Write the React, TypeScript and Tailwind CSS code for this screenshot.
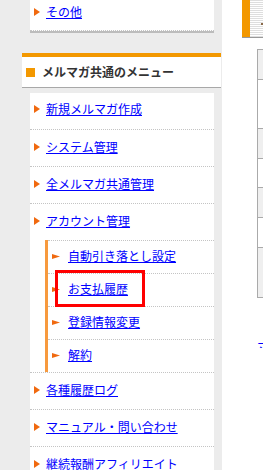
const font = "font-['Noto_Sans_CJK_JP','Noto_Sans_CJK_SC',sans-serif]";

function Arrow() {
  return (
    <svg width="6" height="8" viewBox="0 0 6 8" className="shrink-0">
      <polygon points="0,0 6,4 0,8" fill="#f0690f" />
    </svg>
  );
}

function SubArrow() {
  return (
    <svg width="8" height="5" viewBox="0 0 8 5" className="shrink-0">
      <polygon points="0,0 8,2.5 0,5" fill="#f0690f" />
    </svg>
  );
}

function MenuLink({ label }: { label: string }) {
  return (
    <a href="#" className="text-[12px] leading-[14px] text-[#0000ff] underline whitespace-nowrap">
      {label}
    </a>
  );
}

const subItems = ["自動引き落とし設定", "お支払履歴", "登録情報変更", "解約"];
const afterItems = ["各種履歴ログ", "マニュアル・問い合わせ", "継続報酬アフィリエイト"];

const rows = [
  { h: "h-[30px]", gray: true },
  { h: "h-[49px]", gray: false },
  { h: "h-[30px]", gray: true },
  { h: "h-[29px]", gray: false },
  { h: "h-[30px]", gray: true },
  { h: "h-[30px]", gray: false },
  { h: "h-[50px]", gray: true },
];

export default function App() {
  return (
    <div className={`relative flex h-[470px] w-[263px] overflow-hidden bg-white ${font}`}>
      {/* left column */}
      <div className="w-[222px] shrink-0 bg-[#ececec]">
        <div className="ml-[30px] w-[184px] bg-white">
          <div className="flex h-[31px] items-center gap-[6px] border-b border-dotted border-[#c4c4c4] pb-[7px] pl-[4px]">
            <Arrow />
            <MenuLink label="その他" />
          </div>
          <div className="h-[2px] bg-[#bcbcbc]" />
        </div>

        <div className="mt-[20px] ml-[22px] flex h-[35px] w-[199px] items-center gap-[7px] border-t-4 border-b border-t-[#f39800] border-b-[#a8a8a8] bg-white pl-[4px]">
          <span className="h-[9px] w-[9px] bg-[#f39800]" />
          <span className="text-[12px] font-bold leading-[14px] text-[#333]">メルマガ共通のメニュー</span>
        </div>

        <ul className="mt-[5px] ml-[30px] w-[184px] bg-white">
          <li className="flex h-[37px] items-center gap-[6px] border-b border-dotted border-[#c4c4c4] pb-[5px] pl-[4px]">
            <Arrow />
            <MenuLink label="新規メルマガ作成" />
          </li>
          {["システム管理", "全メルマガ共通管理"].map((t) => (
            <li key={t} className="flex h-[37px] items-center gap-[6px] border-b border-dotted border-[#c4c4c4] pb-[2px] pl-[4px]">
              <Arrow />
              <MenuLink label={t} />
            </li>
          ))}
          <li className="border-b border-dotted border-[#c4c4c4]">
            <div className="flex h-[36px] items-center gap-[6px] pb-[2px] pl-[4px]">
              <Arrow />
              <MenuLink label="アカウント管理" />
            </div>
            <ul className="ml-[15px] border-l-[3px] border-[#f79a3e]">
              {subItems.map((t) => (
                <li key={t} className="flex h-[33px] items-center gap-[8px] border-t border-dotted border-[#c4c4c4] pb-[2px] pl-[4px]">
                  <SubArrow />
                  <MenuLink label={t} />
                </li>
              ))}
            </ul>
          </li>
          {afterItems.map((t) => (
            <li key={t} className="flex h-[37px] items-center gap-[6px] border-b border-dotted border-[#c4c4c4] pb-[2px] pl-[4px]">
              <Arrow />
              <MenuLink label={t} />
            </li>
          ))}
        </ul>
      </div>

      {/* right column (cut off) */}
      <div className="min-w-0 flex-1 overflow-hidden pl-[20px]">
        <div className="flex h-[38px] border-b border-[#999]">
          <div className="w-[8px] bg-[#f39800]" />
          <div className="relative flex-1 bg-[repeating-linear-gradient(to_bottom,#dedede_0px,#dedede_1px,#ffffff_1px,#ffffff_2px)]">
            <span className="absolute top-[23px] left-[11px] h-[2px] w-[2px] bg-[#8a6a4a]" />
          </div>
        </div>
        <div className="mt-[11px] ml-[15px] border-t border-l border-[#aaa]">
          {rows.map((r, i) => (
            <div key={i} className={`${r.h} border-b border-[#aaa] ${r.gray ? "bg-[#efefef]" : "bg-white"}`} />
          ))}
        </div>
        <div className="mt-[35px] ml-[15px] h-[15px] overflow-hidden">
          <a href="#" className="text-[12px] leading-[14px] whitespace-nowrap text-[#0000ff] underline">
            マニュアル
          </a>
        </div>
      </div>

      {/* highlight box */}
      <div className="absolute top-[270px] left-[55px] h-[37px] w-[90px] border-[3px] border-[#ff0000]" />
    </div>
  );
}
